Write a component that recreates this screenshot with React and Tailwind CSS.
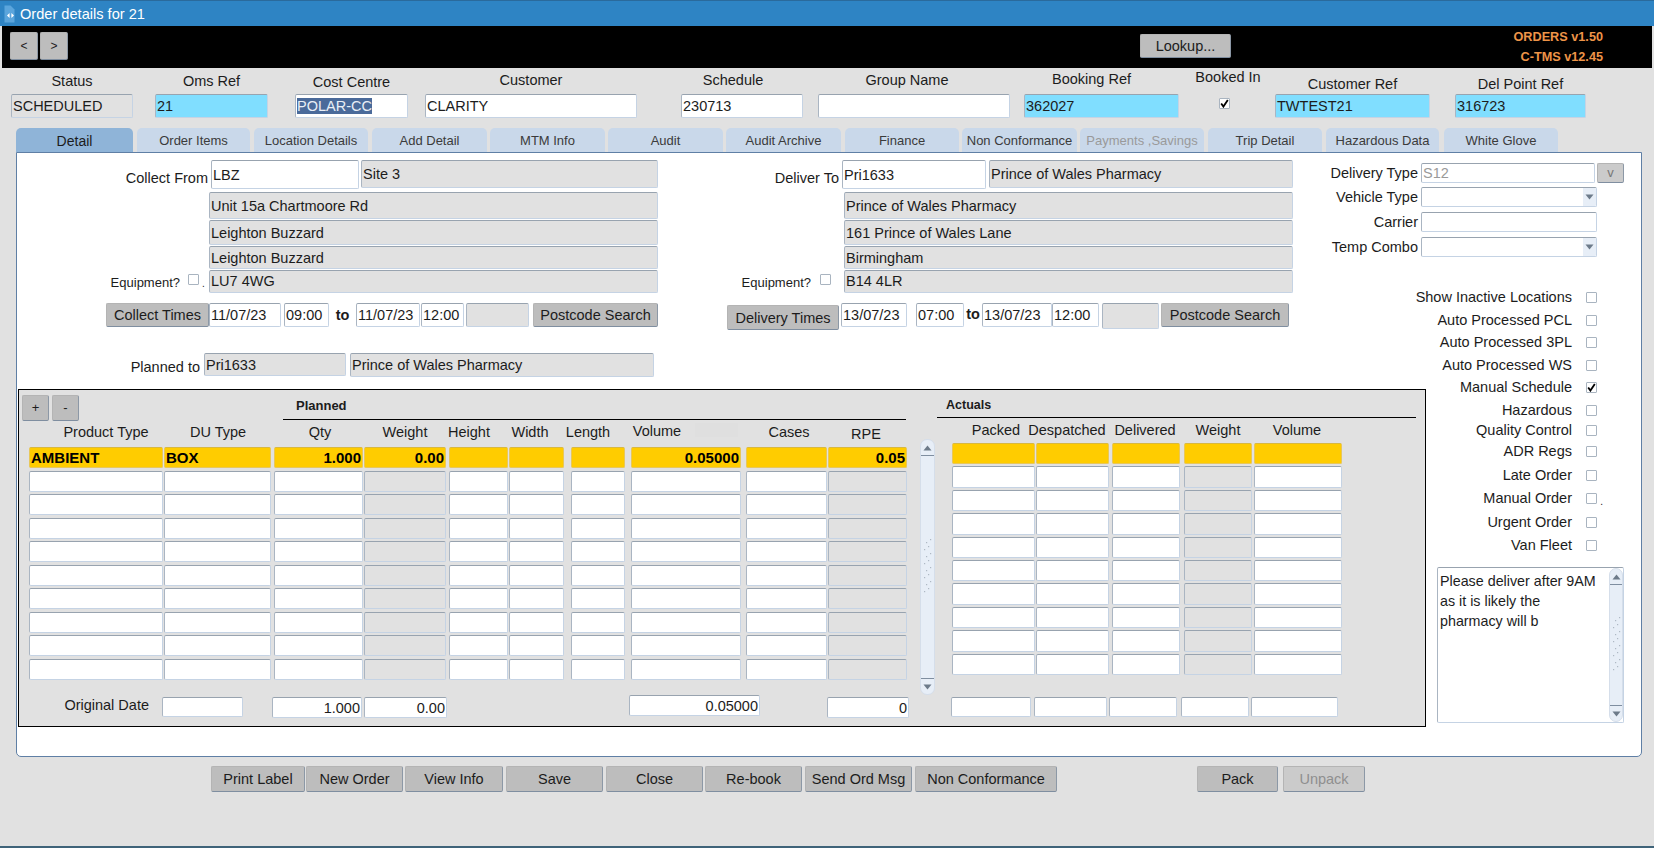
import React from "react";

const boxBase =
  "flex items-center shrink-0 px-[1px] whitespace-nowrap overflow-hidden rounded-[2px] border border-[#c5d3e4] border-t-[#98a3af] border-l-[#aab5c2]";

function Box({ className = "", tone = "white", right, children }) {
  const bg = {
    white: "bg-white",
    grey: "bg-[#e1e1e1]",
    cyan: "bg-[#80deff]",
    yellow: "bg-[#ffcc00] border-[#e8c75a] border-t-[#d8b840] border-l-[#e8c75a] font-bold text-black",
  }[tone];
  return <div className={`${boxBase} ${bg} ${right ? "justify-end" : ""} ${className}`}>{children}</div>;
}

function Btn({ className = "", disabled, children }) {
  return (
    <div
      className={`flex items-center justify-center shrink-0 whitespace-nowrap rounded-[2px] border border-[#b4b4b4] border-b-[#7f8ea0] border-r-[#8c98a6] ${
        disabled ? "bg-[#cbcbcb] text-[#8f8f8f]" : "bg-[#bdbdbd] text-[#1c1c1c]"
      } ${className}`}
    >
      {children}
    </div>
  );
}

function Check({ checked, className = "" }) {
  return (
    <div className={`w-[11px] h-[11px] shrink-0 flex items-center justify-center rounded-[1px] border border-[#a9b4c0] bg-white ${className}`}>
      {checked && (
        <svg width="9" height="9" viewBox="0 0 9 9">
          <path d="M1.2 4.5 L3.4 7.6 L7.8 1" fill="none" stroke="#000" strokeWidth="1.8" />
        </svg>
      )}
    </div>
  );
}

function Arrow({ up, className = "" }) {
  return (
    <svg width="9" height="6" viewBox="0 0 9 6" className={className}>
      <polygon points={up ? "4.5,0.5 8.5,5.5 0.5,5.5" : "0.5,0.5 8.5,0.5 4.5,5.5"} fill="#6d7b8a" />
    </svg>
  );
}

function Grip() {
  const dots = [];
  for (let i = 0; i < 8; i++) {
    dots.push(<rect key={"a" + i} x={i % 2 ? 5 : 7} y={i * 7} width="1.2" height="1.2" fill="#aeb8c4" />);
    dots.push(<rect key={"b" + i} x={i % 2 ? 1 : 3} y={i * 7 + 3} width="1.2" height="1.2" fill="#aeb8c4" />);
  }
  return (
    <svg width="9" height="56" viewBox="0 0 9 56">
      {dots}
    </svg>
  );
}

function ScrollBar({ className = "" }) {
  return (
    <div className={`flex flex-col items-center justify-between shrink-0 rounded-[7px] bg-[#e7eef7] border border-[#d5deea] ${className}`}>
      <div className="w-full h-[16px] flex items-center justify-center border-b border-[#7f8ea0]">
        <Arrow up />
      </div>
      <Grip />
      <div className="w-full h-[16px] flex items-center justify-center border-t border-[#7f8ea0]">
        <Arrow />
      </div>
    </div>
  );
}

function Select({ className = "" }) {
  return (
    <Box className={`!px-0 justify-end ${className}`}>
      <div className="w-[13px] h-full flex items-center justify-center bg-[#e7eef7]">
        <Arrow />
      </div>
    </Box>
  );
}

const headerCols = [
  { label: "Status", labelCls: "pt-[5px]", col: "ml-[11px] w-[122px]", val: "SCHEDULED", tone: "grey" },
  { label: "Oms Ref", labelCls: "pt-[5px]", col: "ml-[22px] w-[113px]", val: "21", tone: "cyan" },
  { label: "Cost Centre", labelCls: "pt-[6px]", col: "ml-[27px] w-[113px]", selected: "POLAR-CC", tone: "white" },
  { label: "Customer", labelCls: "pt-[4px]", col: "ml-[17px] w-[212px]", val: "CLARITY", tone: "white" },
  { label: "Schedule", labelCls: "pt-[4px] pr-[18px]", col: "ml-[44px] w-[122px]", val: "230713", tone: "white" },
  { label: "Group Name", labelCls: "pt-[4px] pr-[14px]", col: "ml-[15px] w-[192px]", val: "", tone: "white" },
  { label: "Booking Ref", labelCls: "pt-[3px] pr-[20px]", col: "ml-[14px] w-[155px]", val: "362027", tone: "cyan" },
  { label: "Booked In", labelCls: "pt-[1px]", col: "ml-[11px] w-[76px]", checkbox: true },
  { label: "Customer Ref", labelCls: "pt-[8px]", col: "ml-[9px] w-[155px]", val: "TWTEST21", tone: "cyan" },
  { label: "Del Point Ref", labelCls: "pt-[8px]", col: "ml-[25px] w-[131px]", val: "316723", tone: "cyan" },
];

const tabs = [
  { name: "Detail", cls: "w-[117px]", active: true },
  { name: "Order Items", cls: "ml-[4px] w-[113px]" },
  { name: "Location Details", cls: "ml-[4px] w-[114px]" },
  { name: "Add Detail", cls: "ml-[4px] w-[115px]" },
  { name: "MTM Info", cls: "ml-[3px] w-[115px]" },
  { name: "Audit", cls: "ml-[3px] w-[115px]" },
  { name: "Audit Archive", cls: "ml-[3px] w-[115px]" },
  { name: "Finance", cls: "ml-[4px] w-[114px]" },
  { name: "Non Conformance", cls: "ml-[3px] w-[115px]" },
  { name: "Payments ,Savings", cls: "ml-[3px] w-[124px]", disabled: true },
  { name: "Trip Detail", cls: "ml-[4px] w-[114px]" },
  { name: "Hazardous Data", cls: "ml-[4px] w-[113px]" },
  { name: "White Glove", cls: "ml-[5px] w-[114px]" },
];

const plannedHeads = [
  { t: "Product Type", c: "ml-[10px] w-[154px]" },
  { t: "DU Type", c: "w-[70px]" },
  { t: "Qty", c: "ml-[35px] w-[64px]" },
  { t: "Weight", c: "ml-[23px] w-[60px]" },
  { t: "Height", c: "ml-[4px] w-[60px]" },
  { t: "Width", c: "ml-[3px] w-[56px]" },
  { t: "Length", c: "ml-[2px] w-[56px]" },
  { t: "Volume", c: "ml-[11px] w-[60px] -mt-[1px]" },
  { t: "Cases", c: "ml-[73px] w-[58px]" },
  { t: "RPE", c: "ml-[22px] w-[52px] mt-[2px]" },
];

const plannedCols = [
  { c: "w-[134px]", first: "AMBIENT" },
  { c: "ml-[1px] w-[107px]", first: "BOX" },
  { c: "ml-[3px] w-[89px]", first: "1.000", right: true },
  { c: "ml-[1px] w-[82px]", first: "0.00", right: true, grey: true },
  { c: "ml-[3px] w-[59px]" },
  { c: "ml-[1px] w-[55px]" },
  { c: "ml-[7px] w-[54px]" },
  { c: "ml-[6px] w-[110px]", first: "0.05000", right: true },
  { c: "ml-[5px] w-[81px]" },
  { c: "ml-[1px] w-[79px]", first: "0.05", right: true, grey: true },
];

const actualCols = [
  { c: "w-[83px]" },
  { c: "ml-[1px] w-[73px]" },
  { c: "ml-[3px] w-[68px]" },
  { c: "ml-[4px] w-[68px]", grey: true },
  { c: "ml-[2px] w-[88px]" },
];

const actualHeads = [
  { t: "Packed", c: "w-[76px] ml-[6px]" },
  { t: "Despatched", c: "w-[80px] -ml-[7px]" },
  { t: "Delivered", c: "w-[70px] ml-[3px]" },
  { t: "Weight", c: "w-[60px] ml-[8px]" },
  { t: "Volume", c: "w-[70px] ml-[14px]" },
];

const rowIndex = [0, 1, 2, 3, 4, 5, 6, 7, 8, 9];

const checksTop = [
  { t: "Show Inactive Locations", c: "" },
  { t: "Auto Processed PCL", c: "mt-[3px]" },
  { t: "Auto Processed 3PL", c: "mt-[2px]" },
  { t: "Auto Processed WS", c: "mt-[3px]" },
];

const checksBottom = [
  { t: "Manual Schedule", c: "", on: true },
  { t: "Hazardous", c: "mt-[3px]" },
  { t: "Quality Control", c: "" },
  { t: "ADR Regs", c: "mt-[1px]" },
  { t: "Late Order", c: "mt-[4px]" },
  { t: "Manual Order", c: "mt-[3px]", dot: true },
  { t: "Urgent Order", c: "mt-[4px]" },
  { t: "Van Fleet", c: "mt-[3px]" },
];

const bottomBtns = [
  { t: "Print Label", c: "ml-[211px] w-[94px]" },
  { t: "New Order", c: "ml-[1px] w-[97px]" },
  { t: "View Info", c: "ml-[2px] w-[98px]" },
  { t: "Save", c: "ml-[3px] w-[97px]" },
  { t: "Close", c: "ml-[3px] w-[97px]" },
  { t: "Re-book", c: "ml-[2px] w-[97px]" },
  { t: "Send Ord Msg", c: "ml-[3px] w-[107px]" },
  { t: "Non Conformance", c: "ml-[3px] w-[142px]" },
  { t: "Pack", c: "ml-[140px] w-[81px]" },
  { t: "Unpack", c: "ml-[5px] w-[82px]", disabled: true },
];

function CheckRow({ item }) {
  return (
    <div className={`h-[20px] flex items-center justify-end pr-[44px] relative ${item.c}`}>
      <span className="mr-[14px] whitespace-nowrap">{item.t}</span>
      <Check checked={item.on} />
      {item.dot && <span className="absolute right-[38px] top-[6px] text-[10px]">.</span>}
    </div>
  );
}

function Address({ lines, className = "" }) {
  return (
    <>
      <Box tone="grey" className={`w-[449px] h-[27px] mt-[3px] ${className}`}>{lines[0]}</Box>
      <Box tone="grey" className={`w-[449px] h-[25px] mt-[1px] ${className}`}>{lines[1]}</Box>
      <Box tone="grey" className={`w-[449px] h-[23px] mt-[1px] ${className}`}>{lines[2]}</Box>
    </>
  );
}

export default function App() {
  return (
    <div
      className="w-[1654px] h-[848px] flex flex-col overflow-hidden bg-[#e1e1e1] text-[14.5px] leading-4 text-[#1c1c1c] border-b-2 border-[#3f6379]"
      style={{ fontFamily: '"Liberation Sans", Arial, sans-serif' }}
    >
      {/* title bar */}
      <div className="h-[26px] shrink-0 flex items-center bg-[#2e84c4] border-t border-[#2a6a9c] text-white text-[14.6px] pl-[4px]">
        <svg width="11" height="18" viewBox="0 0 11 18" className="mr-[5px] mt-[1px]">
          <path d="M0.5 0.5h6l4 4v13h-10z" fill="#5ba5dc" />
          <path d="M3 10.5l2.6-2.6v5.2zM10 10.5l-2.6-2.6v5.2z" fill="#fff" />
        </svg>
        Order details for 21
      </div>

      {/* toolbar */}
      <div className="h-[42px] shrink-0 mx-[2px] flex items-start bg-black">
        <Btn className="ml-[8px] mt-[6px] w-[28px] h-[28px] text-[12px]">&lt;</Btn>
        <Btn className="ml-[2px] mt-[6px] w-[28px] h-[28px] text-[12px]">&gt;</Btn>
        <Btn className="ml-[1072px] mt-[8px] w-[91px] h-[24px]">Lookup...</Btn>
        <div className="ml-auto mr-[49px] mt-[1px] text-right text-[12.7px] leading-[20px] font-bold text-[#ee9448]">
          <div>ORDERS v1.50</div>
          <div>C-TMS v12.45</div>
        </div>
      </div>

      {/* header fields */}
      <div className="h-[60px] shrink-0 flex items-start">
        {headerCols.map((h) => (
          <div key={h.label} className={`flex flex-col shrink-0 ${h.col}`}>
            <div className={`h-[26px] text-center whitespace-nowrap ${h.labelCls}`}>{h.label}</div>
            {h.checkbox ? (
              <Check checked className="mt-[4px] ml-[29px]" />
            ) : (
              <Box tone={h.tone} className="h-[24px] w-full">
                {h.selected ? <span className="bg-[#4a6a9a] text-[#e8eef6]">{h.selected}</span> : h.val}
              </Box>
            )}
          </div>
        ))}
      </div>

      {/* tabs */}
      <div className="h-[24px] shrink-0 flex pl-[16px] text-[13px]">
        {tabs.map((t) => (
          <div
            key={t.name}
            className={`flex items-center justify-center shrink-0 whitespace-nowrap rounded-t-[5px] pt-[2px] ${t.cls} ${
              t.active ? "bg-[#8fb4d8] text-[#1c1c1c] text-[14px]" : "bg-[#c9d8ea]"
            } ${t.disabled ? "text-[#9a9a9a]" : ""} ${!t.active && !t.disabled ? "text-[#3b3b3b]" : ""}`}
          >
            {t.name}
          </div>
        ))}
      </div>

      {/* tab panel */}
      <div className="ml-[16px] w-[1626px] h-[605px] shrink-0 bg-white rounded-b-[5px] border border-[#5f7fa5] grid grid-cols-[1283px_126px_215px] grid-rows-[224px_auto]">
        {/* collect + deliver */}
        <div className="flex flex-col">
          <div className="h-[205px] flex items-start">
            <div className="w-[641px] shrink-0 pt-[7px] flex flex-col">
              <div className="flex items-start">
                <div className="w-[191px] text-right mt-[10px]">Collect From</div>
                <Box className="ml-[3px] w-[148px] h-[29px]">LBZ</Box>
                <Box tone="grey" className="ml-[2px] w-[297px] h-[28px]">Site 3</Box>
              </div>
              <Address className="ml-[192px]" lines={["Unit 15a Chartmoore Rd", "Leighton Buzzard", "Leighton Buzzard"]} />
              <div className="flex items-start mt-[1px]">
                <div className="w-[163px] text-right text-[13px] mt-[5px]">Equipment?</div>
                <Check className="ml-[8px] mt-[4px]" />
                <span className="w-[10px] pl-[3px] mt-[6px] text-[10px]">.</span>
                <Box tone="grey" className="w-[449px] h-[23px] pb-[2px]">LU7 4WG</Box>
              </div>
              <div className="flex items-start mt-[10px] ml-[89px]">
                <Btn className="w-[103px] h-[24px]">Collect Times</Btn>
                <Box className="w-[72px] h-[24px]">11/07/23</Box>
                <Box className="ml-[3px] w-[45px] h-[24px]">09:00</Box>
                <div className="w-[27px] text-center font-bold mt-[4px]">to</div>
                <Box className="w-[64px] h-[24px]">11/07/23</Box>
                <Box className="ml-[1px] w-[43px] h-[24px]">12:00</Box>
                <Box tone="grey" className="ml-[2px] w-[63px] h-[24px]" />
                <Btn className="ml-[4px] w-[125px] h-[24px]">Postcode Search</Btn>
              </div>
            </div>
            <div className="w-[635px] shrink-0 pt-[7px] flex flex-col">
              <div className="flex items-start">
                <div className="w-[181px] text-right mt-[10px]">Deliver To</div>
                <Box className="ml-[3px] w-[144px] h-[29px]">Pri1633</Box>
                <Box tone="grey" className="ml-[3px] w-[304px] h-[28px]">Prince of Wales Pharmacy</Box>
              </div>
              <Address className="ml-[186px]" lines={["Prince of Wales Pharmacy", "161 Prince of Wales Lane", "Birmingham"]} />
              <div className="flex items-start mt-[1px]">
                <div className="w-[153px] text-right text-[13px] mt-[5px]">Equipment?</div>
                <Check className="ml-[9px] mt-[4px]" />
                <Box tone="grey" className="ml-[13px] w-[449px] h-[23px] pb-[2px]">B14 4LR</Box>
              </div>
              <div className="flex items-start mt-[10px] ml-[69px]">
                <Btn className="w-[112px] h-[25px] mt-[2px]">Delivery Times</Btn>
                <Box className="ml-[2px] w-[66px] h-[24px]">13/07/23</Box>
                <Box className="ml-[9px] w-[48px] h-[24px]">07:00</Box>
                <div className="w-[18px] text-center font-bold mt-[3px]">to</div>
                <Box className="w-[70px] h-[24px]">13/07/23</Box>
                <Box className="w-[47px] h-[24px]">12:00</Box>
                <Box tone="grey" className="ml-[3px] w-[57px] h-[26px]" />
                <Btn className="ml-[2px] w-[128px] h-[24px]">Postcode Search</Btn>
              </div>
            </div>
          </div>
          <div className="flex items-start">
            <div className="w-[183px] text-right mt-[6px]">Planned to</div>
            <Box tone="grey" className="ml-[4px] w-[142px] h-[23px]">Pri1633</Box>
            <Box tone="grey" className="ml-[4px] w-[304px] h-[24px]">Prince of Wales Pharmacy</Box>
          </div>
        </div>

        {/* right column, upper part */}
        <div className="col-span-2 flex flex-col pt-[10px]">
          <div className="flex items-center h-[20px]">
            <div className="w-[118px] text-right">Delivery Type</div>
            <Box className="ml-[3px] w-[174px] h-[20px] text-[#9a9a9a]">S12</Box>
            <Btn disabled className="ml-[2px] w-[27px] h-[20px] text-[13px] !text-[#777]">v</Btn>
          </div>
          <div className="flex items-center h-[20px] mt-[4px]">
            <div className="w-[118px] text-right">Vehicle Type</div>
            <Select className="ml-[3px] w-[176px] h-[20px]" />
          </div>
          <div className="flex items-center h-[20px] mt-[5px]">
            <div className="w-[118px] text-right">Carrier</div>
            <Box className="ml-[3px] w-[176px] h-[20px]" />
          </div>
          <div className="flex items-center h-[20px] mt-[5px]">
            <div className="w-[118px] text-right">Temp Combo</div>
            <Select className="ml-[3px] w-[176px] h-[20px]" />
          </div>
          <div className="mt-[30px] flex flex-col">
            {checksTop.map((c) => (
              <CheckRow key={c.t} item={c} />
            ))}
          </div>
        </div>

        {/* order lines frame */}
        <div className="col-span-2 ml-[1px] mt-[12px] w-[1408px] h-[338px] bg-[#e1e1e1] border border-black flex items-start">
          <div className="w-[896px] shrink-0 flex flex-col">
            <div className="h-[30px] flex items-start pl-[3px]">
              <Btn className="mt-[5px] w-[27px] h-[26px] text-[13px]">+</Btn>
              <Btn className="mt-[5px] ml-[3px] w-[27px] h-[26px] text-[13px]">-</Btn>
              <div className="ml-[204px] w-[623px] h-[30px] border-b border-black pl-[13px] pt-[8px] text-[13px] font-bold">Planned</div>
            </div>
            <div className="h-[27px] flex items-start pt-[4px]">
              {plannedHeads.map((h, i) => (
                <React.Fragment key={h.t}>
                  <div className={`text-center whitespace-nowrap shrink-0 ${h.c}`}>{h.t}</div>
                  {i === 7 && <div className="ml-[8px] -mr-[51px] w-[43px] h-[14px] -mt-[1px] shrink-0 bg-[#dfdfdf]" />}
                </React.Fragment>
              ))}
            </div>
            <div className="flex flex-col gap-[2.5px] pl-[10px]">
              {rowIndex.map((r) => (
                <div key={r} className="flex h-[21px]">
                  {plannedCols.map((c, i) => (
                    <Box
                      key={i}
                      right={c.right}
                      tone={r === 0 ? "yellow" : c.grey ? "grey" : "white"}
                      className={`h-[21px] text-[15px] ${c.c}`}
                    >
                      {r === 0 ? c.first : null}
                    </Box>
                  ))}
                </div>
              ))}
            </div>
            <div className="flex items-start mt-[17.5px]">
              <div className="w-[130px] text-right">Original Date</div>
              <Box className="ml-[13px] w-[81px] h-[20px]" />
              <Box right className="ml-[29px] w-[90px] h-[21px]">1.000</Box>
              <Box right className="ml-[2px] w-[83px] h-[21px]">0.00</Box>
              <Box right className="ml-[182px] -mt-[2px] w-[131px] h-[21px]">0.05000</Box>
              <Box right className="ml-[67px] w-[82px] h-[21px]">0</Box>
            </div>
          </div>

          <ScrollBar className="ml-[5px] mt-[49px] w-[15px] h-[256px]" />

          <div className="ml-[2px] w-[479px] shrink-0 flex flex-col">
            <div className="h-[28px] border-b border-black pl-[9px] pt-[7px] text-[12.5px] font-bold">Actuals</div>
            <div className="h-[25px] flex items-start pl-[15px] pt-[4px]">
              {actualHeads.map((h) => (
                <div key={h.t} className={`text-center whitespace-nowrap shrink-0 ${h.c}`}>{h.t}</div>
              ))}
            </div>
            <div className="flex flex-col gap-[2px] pl-[15px]">
              {rowIndex.map((r) => (
                <div key={r} className="flex h-[21.4px]">
                  {actualCols.map((c, i) => (
                    <Box key={i} tone={r === 0 ? "yellow" : c.grey ? "grey" : "white"} className={`h-[21.4px] ${c.c}`} />
                  ))}
                </div>
              ))}
            </div>
            <div className="flex items-start mt-[22px] pl-[14px]">
              <Box className="w-[80px] h-[20px]" />
              <Box className="ml-[3px] w-[73px] h-[20px]" />
              <Box className="ml-[2px] w-[68px] h-[20px]" />
              <Box className="ml-[4px] w-[68px] h-[20px]" />
              <Box className="ml-[2px] w-[87px] h-[20px]" />
            </div>
          </div>
        </div>

        {/* right column, lower part */}
        <div className="flex flex-col">
          {checksBottom.map((c) => (
            <CheckRow key={c.t} item={c} />
          ))}
          <div className="mt-[12px] ml-[11px] w-[187px] h-[156px] flex bg-white rounded-[2px] border border-[#c5d3e4] border-t-[#98a3af] border-l-[#aab5c2]">
            <div className="flex-1 pl-[2px] pt-[3px] leading-[20px] whitespace-nowrap text-[14.3px]">
              <div>Please deliver after 9AM</div>
              <div>as it is likely the</div>
              <div>pharmacy will b</div>
            </div>
            <ScrollBar className="w-[14px] h-full" />
          </div>
        </div>
      </div>

      {/* bottom buttons */}
      <div className="mt-[9px] flex items-start">
        {bottomBtns.map((b) => (
          <Btn key={b.t} disabled={b.disabled} className={`h-[26px] ${b.c}`}>
            {b.t}
          </Btn>
        ))}
      </div>
    </div>
  );
}
